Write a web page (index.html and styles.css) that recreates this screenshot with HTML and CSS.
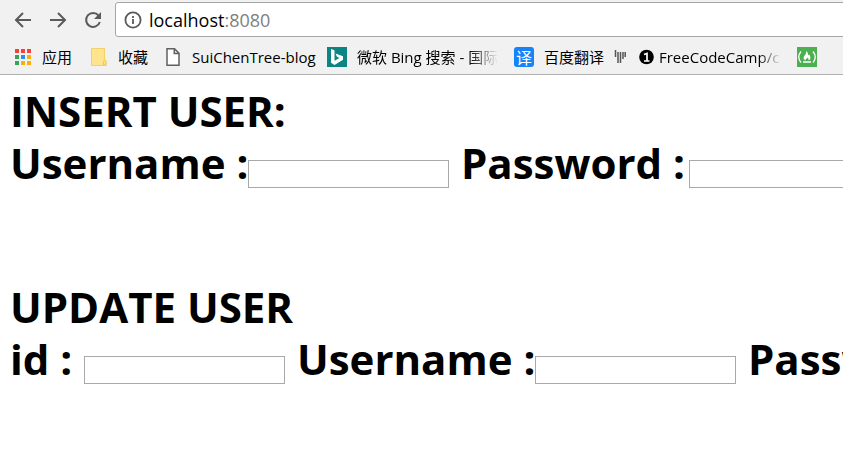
FILE: index.html
```html
<!DOCTYPE html>
<html lang="zh-CN">
<head>
<meta charset="utf-8">
<title>localhost:8080</title>
<link rel="stylesheet" href="styles.css">
</head>
<body>
<header class="chrome">
  <div class="toolbar">
    <svg class="nav back" width="18" height="18" viewBox="0 0 18 18"><path d="M17 9H2M9 2L2 9l7 7"/></svg>
    <svg class="nav forward" width="18" height="18" viewBox="0 0 18 18"><path d="M1 9h15M9 2l7 7-7 7"/></svg>
    <svg class="nav reload" width="18" height="18" viewBox="0 0 18 18"><path d="M14.6 4.6A7 7 0 1 0 15.8 11"/><path class="solid" d="M17 1v7h-7z"/></svg>
    <div class="address">
      <svg class="info" width="18" height="18" viewBox="0 0 18 18"><circle cx="9" cy="9" r="7.6"/><path d="M9 8v5M9 5v2"/></svg>
      <span class="url">localhost<span class="port">:8080</span></span>
    </div>
  </div>
  <nav class="bookmarks">
    <svg class="icon" width="18" height="18" viewBox="0 0 18 18"><path fill="#f44336" d="M1 1h4v4H1zM7 1h4v4H7zM13 1h4v4h-4z"/><path fill="#34a35b" d="M1 7h4v4H1zM1 13h4v4H1z"/><path fill="#2491eb" d="M7 7h4v4H7z"/><path fill="#fbad08" d="M13 7h4v4h-4zM7 13h4v4H7zM13 13h4v4h-4z"/></svg>
    <span class="label apps">应用</span>
    <svg class="icon" width="18" height="20" viewBox="0 0 18 20"><path fill="#ffe48d" stroke="#f5d067" d="M1.5 1.5h13v11l1.500 1v5h-14.500z"/><path fill="#ffe48d" stroke="#efc54d" d="M13.500 18v-3.500l1-1.500 1.500 1.500v3.500z"/></svg>
    <span class="label fav">收藏</span>
    <svg class="icon page-icon" width="14" height="20" viewBox="0 0 14 20"><path fill="#fff" stroke="#606060" stroke-width="1.500" d="M1 1.700h7.500l4.500 4.500v12H1zM8.300 2v4.500h4.500"/></svg>
    <span class="label blog">SuiChenTree-blog</span>
    <svg class="icon" width="20" height="20" viewBox="0 0 20 20"><path fill="#0c8484" d="M0 0h20v20H0z"/><path fill="#fff" d="M4 2l3.500 1.300v10.500l5-2.800-2.500-1.200L8.500 6.500 16 9.200v3.500L7.500 18 4 15.700z"/></svg>
    <span class="label bing">微软 Bing 搜索 - 国际</span>
    <span class="translate">译</span>
    <span class="label baidu">百度翻译</span>
    <svg class="icon" width="12" height="16" viewBox="0 0 12 16"><path fill="none" stroke="#555" stroke-width="1.500" d="M1.500 1v7M4 3v11M6.500 3v11M9 3v7M11.200 3v5"/></svg>
    <svg class="icon one" width="15" height="16" viewBox="0 0 15 16"><circle cx="7.500" cy="8" r="7.300"/><path fill="none" stroke="#fff" stroke-width="1.700" d="M5 5.500l3-1V12M5 12h5.500"/></svg>
    <span class="label fcc">FreeCodeCamp/c</span>
    <svg class="icon" width="20" height="20" viewBox="0 0 20 20"><path fill="#4caf50" d="M0 0h20v20H0z"/><path fill="none" stroke="#fff" stroke-width="1.300" d="M4 4.500q-4.500 5.500 0 11M16 4.500q4.500 5.500 0 11M6 15h8"/><path fill="#fff" d="M9 4c3 2 1.500 3.500 2.500 4.200.7-.3.500-1 .5-1 2 3 2 5-.5 6.300.5-2-.5-2.500-1.200-3-.3 1.500-2.300 1.500-1.500 3-3-1.500-2.500-3.500-.800-5.500C9 6.500 9.500 5.500 9 4z"/></svg>
  </nav>
</header>
<main>
  <section>
    <h1><span class="insert">INSERT USER:</span></h1>
    <div class="fields">
      <label class="username">Username :</label><input type="text">
      <label class="password">Password :</label><input type="text">
    </div>
  </section>
  <section>
    <h1><span class="update">UPDATE USER</span></h1>
    <div class="fields">
      <label class="id">id :</label><input type="text">
      <label class="username">Username :</label><input type="text">
      <label class="password">Password :</label><input type="text">
    </div>
  </section>
</main>
</body>
</html>
```
FILE: styles.css
```css
* { box-sizing: border-box; }
body { margin: 0; height: 451px; overflow: hidden; background: #fff; color: #000; font-family: "Open Sans", "Noto Sans CJK SC", sans-serif; }
svg { display: block; flex: none; }
.chrome { height: 75px; background: #f1f1f1; border-bottom: 1px solid #b0b0b0; overflow: hidden; }
.toolbar { display: flex; align-items: center; height: 39px; padding-left: 14px; }
.nav { fill: none; stroke: #5a5a5a; stroke-width: 2; }
.forward { margin-left: 17px; }
.reload { margin-left: 17px; }
.solid { fill: #5a5a5a; stroke: none; }
.address { display: flex; align-items: center; flex: none; width: 760px; height: 35px; margin-left: 13px; padding-left: 8px; border: 1px solid #a6a6a6; border-radius: 3px; background: #fff; }
.info { fill: none; stroke: #5a5a5a; stroke-width: 1.800; }
.url { margin-left: 7px; font-size: 18px; line-height: 30px; white-space: nowrap; }
.port { color: #808080; }
.bookmarks { display: flex; align-items: center; height: 35px; padding-left: 14px; font-size: 15px; }
.label { flex: none; margin-left: 10px; line-height: 24px; white-space: nowrap; overflow: hidden; }
.apps { width: 48px; }
.fav { width: 48px; }
.page-icon { margin-right: 2px; }
.blog { width: 135px; }
.bing { width: 141px; margin-right: 16px; -webkit-mask-image: linear-gradient(90deg, #000 112px, transparent); mask-image: linear-gradient(90deg, #000 112px, transparent); }
.translate { flex: none; width: 20px; height: 20px; border-radius: 3px; background: #1684f8; color: #fff; font: 16px/20px "Noto Sans CJK SC", sans-serif; text-align: center; }
.baidu { width: 70px; }
.one { margin-left: 13px; }
.fcc { width: 122px; margin-left: 5px; margin-right: 16px; -webkit-mask-image: linear-gradient(90deg, #000 100px, transparent); mask-image: linear-gradient(90deg, #000 100px, transparent); }
main { padding: 10px 0 0 10px; font-size: 42px; font-weight: 700; line-height: 52px; }
section { height: 196px; }
h1 { margin: 0; font: inherit; white-space: nowrap; }
.fields { display: flex; height: 52px; white-space: nowrap; }
.fields label { flex: none; }
.fields .username { width: 238px; }
.fields .password { width: 228px; }
.fields .id { width: 74px; }
input { flex: none; width: 201px; height: 28px; margin: 23px 12px 0 0; padding: 1px; border: 1px solid #a9a9a9; background: #fff; }
```
